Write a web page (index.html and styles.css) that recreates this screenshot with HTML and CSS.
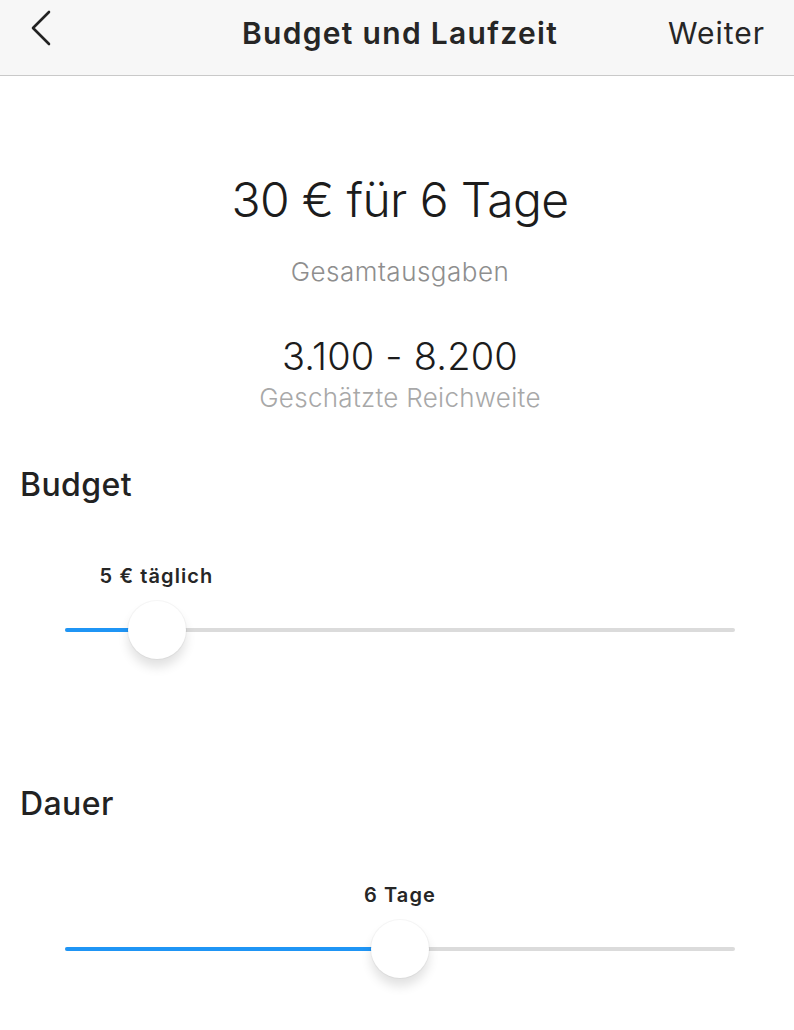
FILE: index.html
```html
<!DOCTYPE html>
<html lang="de">
<head>
<meta charset="utf-8">
<title>Budget und Laufzeit</title>
<link rel="stylesheet" href="styles.css">
</head>
<body>
  <header class="nav">
    <button class="nav-back" aria-label="Zurück">
      <svg width="24" height="40" viewBox="0 0 24 40"><path d="M19 4 L3 20 L19 36" fill="none" stroke="#222" stroke-width="2.6" stroke-linecap="round" stroke-linejoin="round"/></svg>
    </button>
    <h1 class="nav-title">Budget und Laufzeit</h1>
    <span class="nav-action">Weiter</span>
  </header>

  <main class="content">
    <section class="summary">
      <div class="summary-total">30 € für 6 Tage</div>
      <div class="summary-caption">Gesamtausgaben</div>
      <div class="summary-reach">3.100 - 8.200</div>
      <div class="summary-reach-caption">Geschätzte Reichweite</div>
    </section>

    <section class="setting setting-budget">
      <h2 class="setting-title">Budget</h2>
      <div class="slider">
        <div class="slider-label" style="left: 13.66%">5 € täglich</div>
        <div class="slider-track">
          <div class="slider-fill" style="width: 13.66%"></div>
          <div class="slider-thumb" style="left: 13.66%"></div>
        </div>
      </div>
    </section>

    <section class="setting setting-duration">
      <h2 class="setting-title">Dauer</h2>
      <div class="slider">
        <div class="slider-label" style="left: 50%">6 Tage</div>
        <div class="slider-track">
          <div class="slider-fill" style="width: 50%"></div>
          <div class="slider-thumb" style="left: 50%"></div>
        </div>
      </div>
    </section>
  </main>
</body>
</html>
```

FILE: styles.css
```css
* { box-sizing: border-box; }

html, body {
  margin: 0;
  background: #fff;
  font-family: Inter, "Noto Sans", "Liberation Sans", sans-serif;
  color: #262626;
}

/* top navigation bar */
.nav {
  height: 76px;
  background: #f7f7f7;
  border-bottom: 1px solid #c9c9c9;
  display: grid;
  grid-template-columns: 1fr auto 1fr;
  align-items: center;
  padding: 0 29px 0 35px;
}

.nav-back {
  justify-self: start;
  background: none;
  border: 0;
  padding: 0;
  display: flex;
  margin: -19px 0 0 -5px;
}

.nav-title {
  margin: -10px 0 0;
  font-size: 30px;
  line-height: 36px;
  font-weight: 600;
  letter-spacing: 1.3px;
}

.nav-action {
  justify-self: end;
  margin-top: -10px;
  font-size: 30px;
  line-height: 36px;
  font-weight: 400;
  letter-spacing: 1px;
}

/* totals block */
.summary {
  display: flex;
  flex-direction: column;
  align-items: center;
  padding: 95px 0 0 6px;
}

.summary-total {
  font-size: 48px;
  line-height: 58px;
  font-weight: 300;
  letter-spacing: -0.6px;
  color: #1c1c1c;
}

.summary-caption {
  margin-top: 27px;
  font-size: 26px;
  line-height: 32px;
  font-weight: 300;
  letter-spacing: 0.5px;
  color: #8e8e8e;
}

.summary-reach {
  margin-top: 46px;
  font-size: 38px;
  line-height: 44px;
  font-weight: 300;
  letter-spacing: 0.2px;
  color: #1c1c1c;
}

.summary-reach-caption {
  margin-top: 4px;
  font-size: 26px;
  line-height: 32px;
  font-weight: 300;
  letter-spacing: 0.3px;
  color: #a8a8a8;
}

/* sliders */
.setting {
  padding: 0 20px;
}

.setting-budget { margin-top: 51px; }
.setting-duration { margin-top: 99px; }

.setting-title {
  margin: 0;
  font-size: 32px;
  line-height: 40px;
  font-weight: 500;
  letter-spacing: 0.4px;
  color: #222;
}

.slider {
  position: relative;
  margin: 0 39px 0 45px;
  height: 180px;
}

.slider-label {
  position: absolute;
  top: 59px;
  transform: translateX(-50%);
  font-size: 20px;
  line-height: 24px;
  font-weight: 600;
  letter-spacing: 1.1px;
  color: #262626;
  white-space: nowrap;
}

.slider-track {
  position: relative;
  top: 123px;
  height: 4px;
  border-radius: 2px;
  background: #dbdbdb;
}

.slider-fill {
  height: 100%;
  border-radius: 2px;
  background: #1f95f5;
}

.slider-thumb {
  position: absolute;
  top: 50%;
  width: 58px;
  height: 58px;
  margin: -29px 0 0 -29px;
  border-radius: 50%;
  background: #fff;
  box-shadow: 0 0 0 1px rgba(0,0,0,0.035), 0 8px 11px rgba(0,0,0,0.12);
}
```
